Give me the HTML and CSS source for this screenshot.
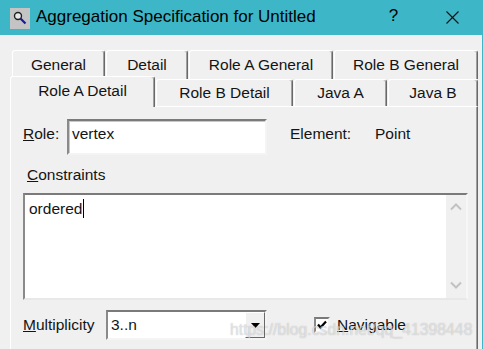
FILE: index.html
```html
<!DOCTYPE html>
<html lang="en">
<head>
  <meta charset="UTF-8" />
  <title>Aggregation Specification for Untitled</title>
  <link rel="stylesheet" href="styles.css">
</head>
<body>
  <div class="titlebar">
    <span class="app-icon">
      <svg width="20" height="21" viewBox="0 0 20 21">
        <rect x="0" y="0" width="20" height="21" fill="#c4c4c4"/>
        <circle cx="8" cy="8" r="3.5" fill="#e8e8e8" stroke="#202020" stroke-width="1.4"/>
        <line x1="10.5" y1="10.5" x2="15.5" y2="15.5" stroke="#1a1aa0" stroke-width="2.2"/>
      </svg>
    </span>
    <span class="title">Aggregation Specification for Untitled</span>
    <span class="help">?</span>
    <span class="close">
      <svg width="13" height="13" viewBox="0 0 13 13">
        <line x1="0.5" y1="0.5" x2="12.5" y2="12.5" stroke="#111" stroke-width="1.1"/>
        <line x1="12.5" y1="0.5" x2="0.5" y2="12.5" stroke="#111" stroke-width="1.1"/>
      </svg>
    </span>
  </div>

  <div class="dialog">
    <div class="tabs">
      <div class="tab-row back">
        <div class="tab w-general">General</div>
        <div class="tab w-detail">Detail</div>
        <div class="tab w-rag">Role A General</div>
        <div class="tab w-rbg">Role B General</div>
      </div>
      <div class="tab-row front">
        <div class="tab selected w-rad">Role A Detail</div>
        <div class="tab w-rbd">Role B Detail</div>
        <div class="tab w-ja">Java A</div>
        <div class="tab w-jb">Java B</div>
      </div>
    </div>

    <div class="panel">
      <div class="role-row">
        <span class="lbl role-lbl"><u>R</u>ole:</span>
        <div class="field role-field">vertex</div>
        <span class="lbl element-lbl">Element:</span>
        <span class="lbl">Point</span>
      </div>

      <div class="constraints-lbl"><u>C</u>onstraints</div>

      <div class="memo">
        <div class="memo-text">ordered<span class="caret"></span></div>
        <div class="scrollbar">
          <svg width="12" height="8" viewBox="0 0 12 8"><polyline points="1,6.5 6,1.5 11,6.5" fill="none" stroke="#c2c2c2" stroke-width="2"/></svg>
          <svg width="12" height="8" viewBox="0 0 12 8"><polyline points="1,1.5 6,6.5 11,1.5" fill="none" stroke="#c2c2c2" stroke-width="2"/></svg>
        </div>
      </div>

      <div class="mult-row">
        <span class="lbl mult-lbl"><u>M</u>ultiplicity</span>
        <div class="combo">
          <span class="combo-text">3..n</span>
          <span class="drop-btn">
            <svg width="9" height="5" viewBox="0 0 9 5"><polygon points="0,0 9,0 4.5,5" fill="#000"/></svg>
          </span>
        </div>
        <span class="check">
          <svg width="12" height="12" viewBox="0 0 12 12"><polyline points="2,5.5 4.5,8.5 10,2.5" fill="none" stroke="#000" stroke-width="2.2"/></svg>
        </span>
        <span class="lbl"><u>N</u>avigable</span>
      </div>
    </div>

    <div class="watermark">https://blog.csdn.net/qq_41398448</div>
  </div>
</body>
</html>
```

FILE: styles.css
```css
body {
  margin: 0;
  width: 483px;
  height: 349px;
  overflow: hidden;
  font-family: "Liberation Sans", Arial, sans-serif;
  color: #141414;
  background: #f0f0f0;
}

.titlebar {
  display: flex;
  align-items: center;
  height: 35px;
  background: #3db6c7;
  color: #000;
}

.app-icon {
  display: flex;
  margin-left: 10px;
  margin-top: 1px;
}

.title {
  margin-left: 6px;
  font-size: 17px;
  margin-top: -2px;
}

.help {
  margin-left: 73px;
  font-size: 17px;
  margin-top: -3px;
}

.close {
  display: flex;
  margin-left: 48px;
  margin-top: -1px;
}

.dialog {
  position: relative;
  height: 314px;
  padding-left: 10px;
  border-right: 1px solid #3db6c7;
  box-sizing: border-box;
}

/* tabs */
.tabs {
  width: 468px;
  padding-top: 15px;
}

.tab-row {
  display: flex;
  gap: 1px;
  font-size: 15.5px;
}

.tab-row.back {
  height: 29px;
  padding-left: 2px;
}

.tab-row.front {
  height: 30px;
  margin-top: -3px;
}

.tab {
  box-sizing: border-box;
  display: flex;
  align-items: center;
  justify-content: center;
  background: #f0f0f0;
  border-top: 1px solid #fff;
  border-left: 1px solid #fff;
  border-right: 1px solid #696969;
  box-shadow: inset -1px 0 #a0a0a0;
  border-radius: 3px 3px 0 0;
  padding-bottom: 1px;
}

.tab-row.front .tab {
  margin-top: 3px;
  padding-bottom: 0;
}

.tab-row.front .tab.selected {
  margin-top: 0;
  height: 31px;
  margin-bottom: -1px;
  position: relative;
  padding-bottom: 2px;
}

.w-general { width: 93px; }
.w-detail { width: 82px; }
.w-rag { width: 144px; }
.w-rbg { width: 144px; }
.w-rad { width: 145px; }
.w-rbd { width: 137px; }
.w-ja { width: 93px; }
.w-jb { width: 90px; }

/* panel */
.panel {
  box-sizing: border-box;
  width: 468px;
  height: 244px;
  border-top: 1px solid #fff;
  border-left: 1px solid #fff;
  border-right: 1px solid #696969;
  box-shadow: inset -1px 0 #a0a0a0;
  padding: 12px 0 0 12px;
  font-size: 15.5px;
}

.lbl {
  line-height: 18px;
  white-space: nowrap;
}

.role-row {
  display: flex;
  align-items: flex-start;
  height: 36px;
}

.role-row .lbl {
  margin-top: 6px;
}

.role-lbl {
  width: 44px;
}

.field {
  box-sizing: border-box;
  background: #fff;
  border-style: solid;
  border-width: 2px;
  border-color: #7a7a7a #f4f4f4 #f4f4f4 #8a8a8a;
  box-shadow: inset 1px 1px #c8c8c8;
}

.role-field {
  width: 200px;
  height: 36px;
  padding: 4px 3px;
  line-height: 18px;
}

.element-lbl {
  margin-left: 23px;
  width: 85px;
}

.constraints-lbl {
  margin-top: 11px;
  padding-left: 4px;
  line-height: 18px;
}

.memo {
  box-sizing: border-box;
  display: flex;
  width: 445px;
  height: 107px;
  margin-top: 9px;
  background: #fff;
  border-style: solid;
  border-width: 2px;
  border-color: #7a7a7a #f6f6f6 #e8e8e8 #8a8a8a;
}

.memo-text {
  flex: 1;
  padding: 4px 4px;
  line-height: 18px;
}

.caret {
  display: inline-block;
  width: 1px;
  height: 19px;
  background: #000;
  vertical-align: -4px;
  margin-left: 1px;
}

.scrollbar {
  width: 20px;
  background: #f0f0f0;
  display: flex;
  flex-direction: column;
  justify-content: space-between;
  align-items: center;
  padding: 8px 0 9px;
}

.mult-row {
  display: flex;
  align-items: center;
  height: 30px;
  margin-top: 10px;
}

.mult-lbl {
  width: 83px;
}

.combo {
  box-sizing: border-box;
  display: flex;
  width: 161px;
  height: 30px;
  background: #fff;
  border-style: solid;
  border-width: 2px;
  border-color: #7a7a7a #f4f4f4 #f4f4f4 #8a8a8a;
}

.combo-text {
  flex: 1;
  padding-left: 3px;
  line-height: 26px;
}

.drop-btn {
  box-sizing: border-box;
  width: 20px;
  display: flex;
  align-items: center;
  justify-content: center;
  background: #f0f0f0;
  border-style: solid;
  border-width: 1px;
  border-color: #fff #696969 #696969 #fff;
  padding-top: 1px;
}

.check {
  box-sizing: border-box;
  display: flex;
  align-items: center;
  justify-content: center;
  width: 16px;
  height: 16px;
  margin-left: 47px;
  margin-right: 7px;
  background: #fff;
  border-style: solid;
  border-width: 2px;
  border-color: #7a7a7a #f4f4f4 #f4f4f4 #8a8a8a;
}

.watermark {
  position: absolute;
  left: 230px;
  top: 286px;
  font-size: 15.8px;
  line-height: 18px;
  font-family: "Liberation Sans", Arial, sans-serif;
  color: rgba(255, 255, 255, 0.55);
  text-shadow: 0 0 1px rgba(90, 90, 90, 0.45);
  white-space: nowrap;
}
```
